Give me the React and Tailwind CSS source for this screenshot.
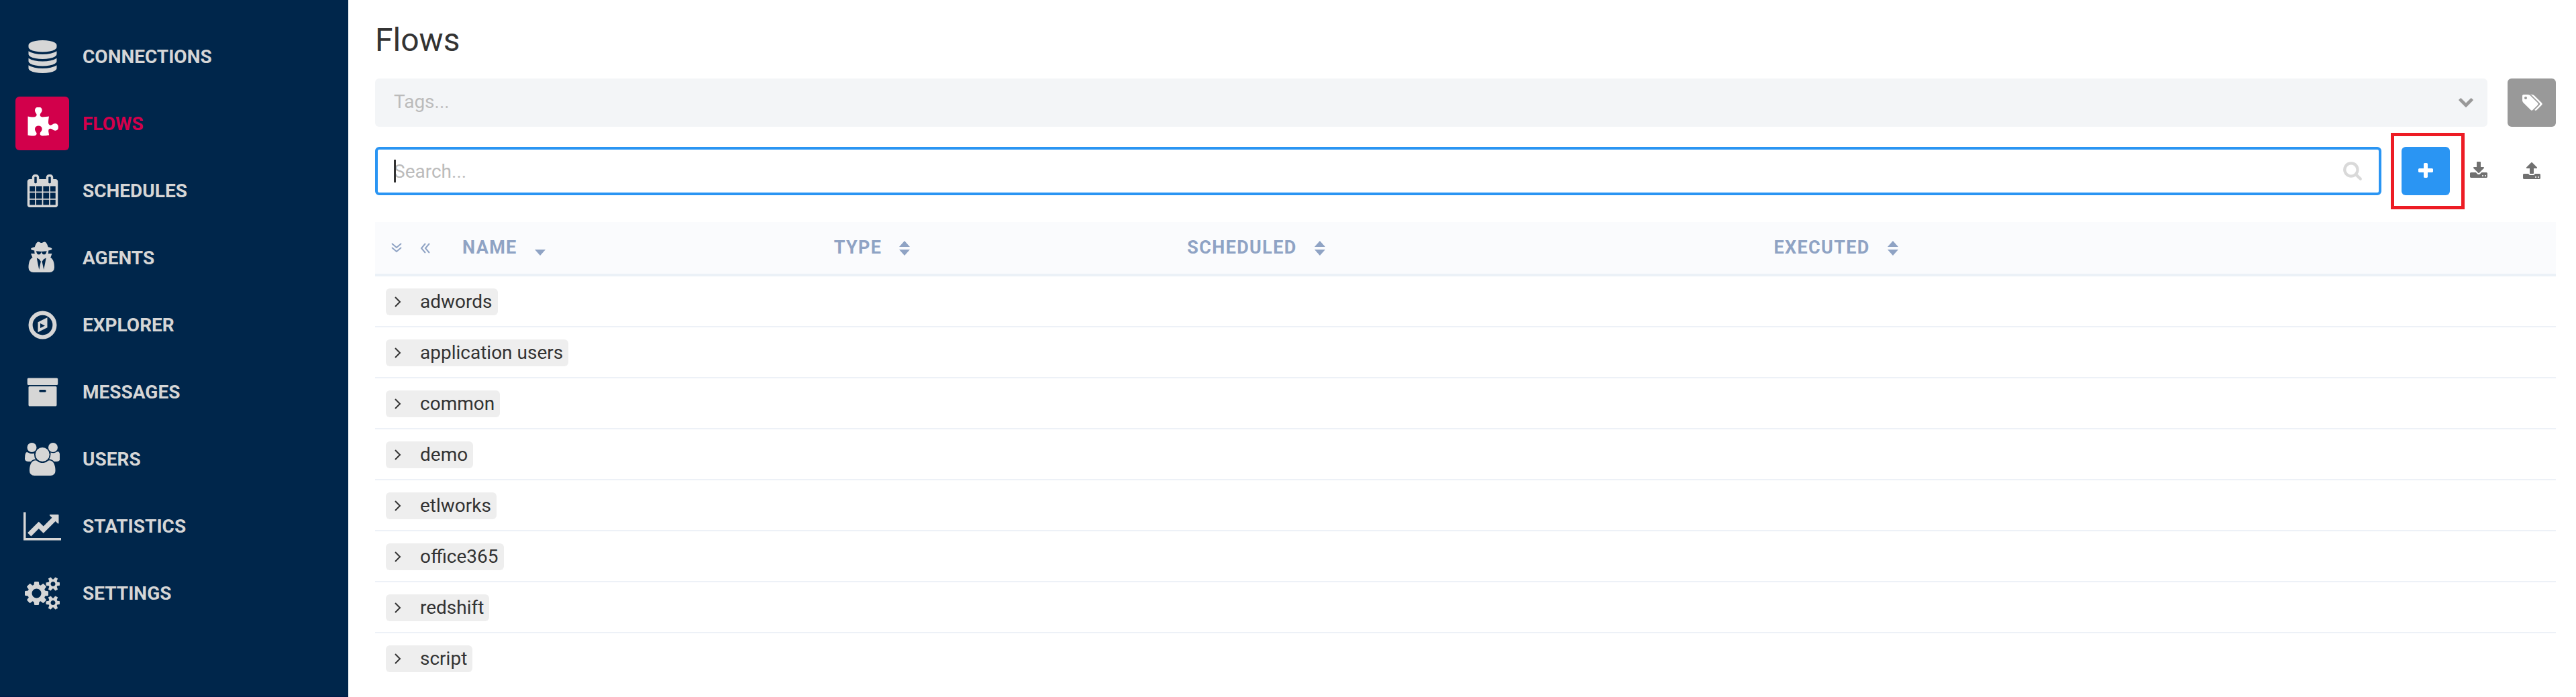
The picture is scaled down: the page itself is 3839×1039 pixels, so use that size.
import React, { useState } from "react";

const icons = {
  database: {
    width: 1792,
    d: "M896 768q237 0 443-43t325-127v170q0 69-103 128t-280 93.5-385 34.5-385-34.5-280-93.5-103-128v-170q119 84 325 127t443 43zm0 768q237 0 443-43t325-127v170q0 69-103 128t-280 93.5-385 34.5-385-34.5-280-93.5-103-128v-170q119 84 325 127t443 43zm0-384q237 0 443-43t325-127v170q0 69-103 128t-280 93.5-385 34.5-385-34.5-280-93.5-103-128v-170q119 84 325 127t443 43zm0-1152q208 0 385 34.5t280 93.5 103 128v128q0 69-103 128t-280 93.5-385 34.5-385-34.5-280-93.5-103-128v-128q0-69 103-128t280-93.5 385-34.5z",
  },
  puzzle: {
    width: 1792,
    d: "M1755 1083q0 81-44.5 135t-123.5 54q-41 0-77.5-17.5t-59-38-56.5-38-71-17.5q-110 0-110 124 0 39 16 115t15 115v5q-22 0-33 1-34 3-97.5 11.5t-115.5 13.5-98 5q-61 0-103-26.5t-42-83.5q0-37 17.5-71t38-56.5 38-59 17.5-77.5q0-79-54-123.5t-135-44.5q-84 0-143 45.5t-59 127.5q0 43 15 83t33.5 64.5 33.5 53 15 50.5q0 45-46 89-37 35-117 35-95 0-245-24-9-2-27.5-4t-27.5-4l-13-2q-1 0-3-1-2 0-2-1v-1024q2 1 17.5 3.5t34 5 21.5 3.5q150 24 245 24 80 0 117-35 46-44 46-89 0-22-15-50.5t-33.5-53-33.5-64.5-15-83q0-82 59-127.5t144-45.5q80 0 134 44.5t54 123.5q0 41-17.5 77.5t-38 59-38 56.5-17.5 71q0 57 42 83.5t103 26.5q64 0 180-15t163-17v2q-1 2-3.5 17.5t-5 34-3.5 21.5q-24 150-24 245 0 80 35 117 44 46 89 46 22 0 50.5-15t53-33.5 64.5-33.5 83-15q82 0 127.5 59t45.5 143z",
  },
  calendar: {
    width: 1792,
    d: "M192 1664h288v-288h-288v288zm352 0h320v-288h-320v288zm-352-352h288v-320h-288v320zm352 0h320v-320h-320v320zm-352-384h288v-288h-288v288zm736 736h320v-288h-320v288zm-384-736h320v-288h-320v288zm768 736h288v-288h-288v288zm-384-352h320v-320h-320v320zm-352-864v-288q0-13-9.5-22.5t-22.5-9.5h-64q-13 0-22.5 9.5t-9.5 22.5v288q0 13 9.5 22.5t22.5 9.5h64q13 0 22.5-9.5t9.5-22.5zm736 864h288v-320h-288v320zm-384-384h320v-288h-320v288zm384 0h288v-288h-288v288zm32-480v-288q0-13-9.5-22.5t-22.5-9.5h-64q-13 0-22.5 9.5t-9.5 22.5v288q0 13 9.5 22.5t22.5 9.5h64q13 0 22.5-9.5t9.5-22.5zm384-64v1280q0 52-38 90t-90 38h-1408q-52 0-90-38t-38-90v-1280q0-52 38-90t90-38h128v-96q0-66 47-113t113-47h64q66 0 113 47t47 113v96h384v-96q0-66 47-113t113-47h64q66 0 113 47t47 113v96h128q52 0 90 38t38 90z",
  },
  agent: {
    width: 1792,
    d: "M704 1536l96-448-96-128-128-64zm256 0l128-640-128 64-96 128zm160-996q-2-4-4-6-10-8-96-8-70 0-167 19-7 2-21 2t-21-2q-97-19-167-19-86 0-96 8-2 2-4 6 2 18 4 27 2 3 7.5 6.5t7.5 10.5q2 4 7.5 20.5t7 20.5 7.5 17 8.5 17 9 14 12 13.5 14 9.5 17.5 8 20.5 4 24.5 2q36 0 59-12.5t32.5-30 14.5-34.5 11.5-29.5 17.5-12.5h12q11 0 17.5 12.5t11.5 29.5 14.5 34.5 32.5 30 59 12.5q13 0 24.5-2t20.5-4 17.5-8 14-9.5 12-13.5 9-14 8.5-17 7.5-17 7-20.5 7.5-20.5q2-7 7.5-10.5t7.5-6.5q2-9 4-27zm416 879q0 121-73 190t-194 69h-874q-121 0-194-69t-73-190q0-61 4.5-118t19-125.5 37.5-123.5 63.5-103.5 93.5-74.5l-90-220h214q-22-64-22-128 0-12 2-32-194-40-194-96 0-57 210-99 17-62 51.5-134t70.5-114q32-37 76-37 30 0 84 31t84 31 84-31 84-31q44 0 76 37 36 42 70.5 114t51.5 134q210 42 210 99 0 56-194 96 7 81-20 160h214l-82 225q63 33 107.5 96.5t65.5 143.5 29 151.5 8 148.5z",
  },
  compass: {
    width: 1792,
    d: "M768 1063l256-128-256-128zM1152 489v542l-512 256v-542zM896 352a544 544 0 1 0 0 1088a544 544 0 1 0 0-1088zM896 128a768 768 0 1 1 0 1536a768 768 0 1 1 0-1536z",
  },
  archive: {
    width: 1792,
    d: "M1088 832q0-26-19-45t-45-19h-256q-26 0-45 19t-19 45 19 45 45 19h256q26 0 45-19t19-45zm576-192v960q0 26-19 45t-45 19h-1408q-26 0-45-19t-19-45v-960q0-26 19-45t45-19h1408q26 0 45 19t19 45zm64-448v256q0 26-19 45t-45 19h-1536q-26 0-45-19t-19-45v-256q0-26 19-45t45-19h1536q26 0 45 19t19 45z",
  },
  users: {
    width: 1920,
    d: "M593 896q-162 5-265 128h-134q-82 0-138-40.5t-56-118.5q0-353 124-353 6 0 43.5 21t97.5 42.5 119 21.5q67 0 133-23-5 37-5 66 0 159 81 296zm1071 637q0 120-73 189.5t-194 69.5h-874q-121 0-194-69.5t-73-189.5q0-53 3.5-103.5t14-109 26.5-108.5 43-97.5 62-81 85.5-53.5 111.5-20q10 0 43 21.5t73 48 107 48 135 21.5 135-21.5 107-48 73-48 43-21.5q61 0 111.5 20t85.5 53.5 62 81 43 97.5 26.5 108.5 14 109 3.5 103.5zm-1024-1277q0 106-75 181t-181 75-181-75-75-181 75-181 181-75 181 75 75 181zm704 384q0 159-112.5 271.5t-271.5 112.5-271.5-112.5-112.5-271.5 112.5-271.5 271.5-112.5 271.5 112.5 112.5 271.5zm576 225q0 78-56 118.5t-138 40.5h-134q-103-123-265-128 81-137 81-296 0-29-5-66 66 23 133 23 59 0 119-21.5t97.5-42.5 43.5-21q124 0 124 353zm-128-609q0 106-75 181t-181 75-181-75-75-181 75-181 181-75 181 75 75 181z",
  },
  chart: {
    width: 2048,
    d: "M2048 1536v128h-2048v-1536h128v1408h1920zm-128-1248v435q0 21-19.5 29.5t-35.5-7.5l-121-121-633 633q-10 10-23 10t-23-10l-233-233-416 416-192-192 585-585q10-10 23-10t23 10l233 233 464-464-121-121q-16-16-7.5-35.5t29.5-19.5h435q14 0 23 9t9 23z",
  },
  cogs: {
    width: 1920,
    d: "M896 896q0-106-75-181t-181-75-181 75-75 181 75 181 181 75 181-75 75-181zm768 512q0-52-38-90t-90-38-90 38-38 90q0 53 37.5 90.5t90.5 37.5 90.5-37.5 37.5-90.5zm0-1024q0-52-38-90t-90-38-90 38-38 90q0 53 37.5 90.5t90.5 37.5 90.5-37.5 37.5-90.5zm-384 421v185q0 10-7 19.5t-16 10.5l-155 24q-11 35-32 76 34 48 90 115 7 11 7 20 0 12-7 19-23 30-82.5 89.5t-78.5 59.5q-11 0-21-7l-115-90q-37 19-77 31-11 108-23 155-7 24-30 24h-186q-11 0-20-7.5t-10-17.5l-23-153q-34-10-75-31l-118 89q-7 7-20 7-11 0-21-8-144-133-144-160 0-9 7-19 10-14 41-53t47-61q-23-44-35-82l-152-24q-10-1-17-9.5t-7-19.5v-185q0-10 7-19.5t16-10.5l155-24q11-35 32-76-34-48-90-115-7-11-7-20 0-12 7-20 22-30 82-89t79-59q11 0 21 7l115 90q34-18 77-32 11-108 23-154 7-24 30-24h186q11 0 20 7.5t10 17.5l23 153q34 10 75 31l118-89q8-7 20-7 11 0 21 8 144 133 144 160 0 8-7 19-12 16-42 54t-45 60q23 48 34 82l152 23q10 2 17 10.5t7 19.5zm640 533v140q0 16-149 31-12 27-30 52 51 113 51 138 0 4-4 7-122 71-124 71-8 0-46-47t-52-68q-20 2-30 2t-30-2q-14 21-52 68t-46 47q-2 0-124-71-4-3-4-7 0-25 51-138-18-25-30-52-149-15-149-31v-140q0-16 149-31 13-29 30-52-51-113-51-138 0-4 4-7 4-2 35-20t59-34 30-16q8 0 46 46.5t52 67.5q20-2 30-2t30 2q51-71 92-112l6-2q4 0 124 70 4 3 4 7 0 25-51 138 17 23 30 52 149 15 149 31zm0-1024v140q0 16-149 31-12 27-30 52 51 113 51 138 0 4-4 7-122 71-124 71-8 0-46-47t-52-68q-20 2-30 2t-30-2q-14 21-52 68t-46 47q-2 0-124-71-4-3-4-7 0-25 51-138-18-25-30-52-149-15-149-31v-140q0-16 149-31 13-29 30-52-51-113-51-138 0-4 4-7 4-2 35-20t59-34 30-16q8 0 46 46.5t52 67.5q20-2 30-2t30 2q51-71 92-112l6-2q4 0 124 70 4 3 4 7 0 25-51 138 17 23 30 52 149 15 149 31z",
  },
  chevronDown: {
    width: 1792,
    d: "M1683 808l-742 741q-19 19-45 19t-45-19l-742-741q-19-19-19-45.5t19-45.5l166-165q19-19 45-19t45 19l531 531 531-531q19-19 45-19t45 19l166 165q19 19 19 45.5t-19 45.5z",
  },
  tags: {
    width: 2048,
    d: "M576 448q0-53-37.5-90.5t-90.5-37.5-90.5 37.5-37.5 90.5 37.5 90.5 90.5 37.5 90.5-37.5 37.5-90.5zm1067 576q0 53-37 90l-491 492q-39 37-91 37-53 0-90-37l-715-716q-38-37-64.5-101t-26.5-117v-416q0-52 38-90t90-38h416q53 0 117 26.5t102 64.5l715 714q37 39 37 91zm384 0q0 53-37 90l-491 492q-39 37-91 37-36 0-59-14t-53-45l470-470q37-37 37-90 0-52-37-91l-715-714q-38-38-102-64.5t-117-26.5h224q53 0 117 26.5t102 64.5l715 714q37 39 37 91z",
  },
  search: {
    width: 1792,
    d: "M1216 832q0-185-131.5-316.5t-316.5-131.5-316.5 131.5-131.5 316.5 131.5 316.5 316.5 131.5 316.5-131.5 131.5-316.5zm512 832q0 52-38 90t-90 38q-54 0-90-38l-343-342q-179 124-399 124-143 0-273.5-55.5t-225-150-150-225-55.5-273.5 55.5-273.5 150-225 225-150 273.5-55.5 273.5 55.5 225 150 150 225 55.5 273.5q0 220-124 399l343 343q37 37 37 90z",
  },
  plus: {
    width: 1792,
    d: "M1600 736v192q0 40-28 68t-68 28h-416v416q0 40-28 68t-68 28h-192q-40 0-68-28t-28-68v-416h-416q-40 0-68-28t-28-68v-192q0-40 28-68t68-28h416v-416q0-40 28-68t68-28h192q40 0 68 28t28 68v416h416q40 0 68 28t28 68z",
  },
  download: {
    width: 1792,
    d: "M1344 1344q0-26-19-45t-45-19-45 19-19 45 19 45 45 19 45-19 19-45zm256 0q0-26-19-45t-45-19-45 19-19 45 19 45 45 19 45-19 19-45zm128-224v320q0 40-28 68t-68 28h-1472q-40 0-68-28t-28-68v-320q0-40 28-68t68-28h465l135 136q58 56 136 56t136-56l136-136h464q40 0 68 28t28 68zm-325-569q17 41-14 70l-448 448q-18 19-45 19t-45-19l-448-448q-31-29-14-70 17-39 59-39h256v-448q0-26 19-45t45-19h256q26 0 45 19t19 45v448h256q42 0 59 39z",
  },
  upload: {
    width: 1792,
    d: "M1344 1472q0-26-19-45t-45-19-45 19-19 45 19 45 45 19 45-19 19-45zm256 0q0-26-19-45t-45-19-45 19-19 45 19 45 45 19 45-19 19-45zm128-224v320q0 40-28 68t-68 28h-1472q-40 0-68-28t-28-68v-320q0-40 28-68t68-28h427q21 56 70.5 92t110.5 36h256q61 0 110.5-36t70.5-92h427q40 0 68 28t28 68zm-325-648q-17 40-59 40h-256v448q0 26-19 45t-45 19h-256q-26 0-45-19t-19-45v-448h-256q-42 0-59-40-17-39 14-69l448-448q18-19 45-19t45 19l448 448q31 30 14 69z",
  },
};

const Icon = ({ name, className }) => (
  <svg
    viewBox={`0 0 ${icons[name].width} 1792`}
    fill="currentColor"
    fillRule={name === "compass" ? "evenodd" : "nonzero"}
    className={className}
    aria-hidden="true"
  >
    <path d={icons[name].d} />
  </svg>
);

const menu = [
  { label: "CONNECTIONS", icon: "database" },
  { label: "FLOWS", icon: "puzzle" },
  { label: "SCHEDULES", icon: "calendar" },
  { label: "AGENTS", icon: "agent" },
  { label: "EXPLORER", icon: "compass" },
  { label: "MESSAGES", icon: "archive" },
  { label: "USERS", icon: "users" },
  { label: "STATISTICS", icon: "chart" },
  { label: "SETTINGS", icon: "cogs" },
];

const folders = [
  "adwords",
  "application users",
  "common",
  "demo",
  "etlworks",
  "office365",
  "redshift",
  "script",
];

const Sidebar = ({ active }) => (
  <nav className="w-[519px] shrink-0 border-b-2 border-[#001d4a] bg-[#00264b] pt-[34px]">
    <ul>
      {menu.map((item) => (
        <li key={item.label}>
          <a
            href="#"
            className={`flex h-[100px] items-center gap-5 pl-[23px] text-[28px] font-bold ${
              item.label === active ? "text-[#d2004b]" : "text-[#d6d6d6]"
            }`}
          >
            <span
              className={`flex size-20 items-center justify-center rounded-md ${
                item.label === active ? "bg-[#d2004b] text-white" : ""
              }`}
            >
              <Icon name={item.icon} className="h-[49px]" />
            </span>
            <span className="pt-px">{item.label}</span>
          </a>
        </li>
      ))}
    </ul>
  </nav>
);

const SortIcon = () => (
  <svg viewBox="0 0 16 22" fill="currentColor" className="h-[22px] w-4" aria-hidden="true">
    <path d="M8 0L16 9H0zM0 13h16L8 22z" />
  </svg>
);

const SortedIcon = () => (
  <svg viewBox="0 0 16 22" fill="currentColor" className="h-[22px] w-4" aria-hidden="true">
    <path d="M0 13h16L8 22z" />
  </svg>
);

const SortButton = ({ label, sorted }) => (
  <button type="button" className="flex items-center gap-[26px] tracking-wider">
    {label}
    {sorted ? <SortedIcon /> : <SortIcon />}
  </button>
);

const FlowsTable = () => (
  <table className="mt-10 w-full table-fixed border-separate border-spacing-0 text-left">
    <thead className="bg-[#fafbfd] text-[27px] text-[#8fa3c4]">
      <tr>
        <th className="h-[81px] w-[20.3%] border-b-4 border-[#ebf1f7] pl-6">
          <div className="flex items-center">
            <button type="button" aria-label="Expand all">
              <svg viewBox="0 0 16 16" fill="none" stroke="currentColor" strokeWidth="2" className="size-4">
                <path d="M1 1l7 6 7-6M1 7l7 6 7-6" />
              </svg>
            </button>
            <button type="button" aria-label="Collapse all" className="mx-[27px]">
              <svg viewBox="0 0 16 16" fill="none" stroke="currentColor" strokeWidth="2" className="size-4">
                <path d="M8 1L2 8l6 7M14 1L8 8l6 7" />
              </svg>
            </button>
            <div className="pl-5">
              <SortButton label="NAME" sorted />
            </div>
          </div>
        </th>
        <th className="w-[16.2%] border-b-4 border-[#ebf1f7] pl-6">
          <SortButton label="TYPE" />
        </th>
        <th className="w-[26.9%] border-b-4 border-[#ebf1f7] pl-6">
          <SortButton label="SCHEDULED" />
        </th>
        <th className="border-b-4 border-[#ebf1f7] pl-6">
          <SortButton label="EXECUTED" />
        </th>
      </tr>
    </thead>
    <tbody>
      {folders.map((folder) => (
        <tr key={folder} className="group h-[76px]">
          <td colSpan="4" className="border-b-2 border-[#edf1f7] px-4 pt-0.5 group-last:border-transparent">
            <button
              type="button"
              className="flex h-10 items-center rounded-md bg-[#eee] pr-2 pl-[13px] text-[28px]"
            >
              <svg viewBox="0 0 10 16" fill="none" stroke="currentColor" strokeWidth="2" className="mr-7 h-4 w-[10px]">
                <path d="M1 1l7 7-7 7" />
              </svg>
              {folder}
            </button>
          </td>
        </tr>
      ))}
    </tbody>
  </table>
);

export default function App() {
  const [search, setSearch] = useState("");

  return (
    <div className="flex min-h-screen bg-white font-[Roboto,sans-serif] text-[#333]">
      <Sidebar active="FLOWS" />

      <main className="min-w-0 flex-1 pt-8 pr-[30px] pl-10">
        <h1 className="text-[48px] leading-[56px]">Flows</h1>

        <div className="mt-[29px] flex gap-[30px]">
          <div className="relative flex-1">
            <select
              aria-label="Tags"
              className="h-[72px] w-full appearance-none rounded-md bg-[#f3f5f7] px-7 pb-0.5 text-[28px] text-[#bbb]"
            >
              <option>Tags...</option>
            </select>
            <Icon name="chevronDown" className="pointer-events-none absolute top-[22px] right-5 size-6 text-[#999]" />
          </div>
          <button
            type="button"
            aria-label="Manage tags"
            className="flex size-[72px] items-center justify-center rounded-md bg-[#999] text-white"
          >
            <Icon name="tags" className="h-7" />
          </button>
        </div>

        <div className="mt-[30px] flex gap-[7px]">
          <div className="relative mr-[23px] flex-1">
            <input
              type="text"
              aria-label="Search"
              placeholder="Search..."
              value={search}
              onChange={(e) => setSearch(e.target.value)}
              className="h-[72px] w-full rounded-md border-4 border-[#2a95f3] px-6 text-[28px] caret-transparent outline-none placeholder:text-[#bbb]"
            />
            {/* text cursor */}
            <span className="absolute top-[19px] left-7 h-[34px] w-[3px] bg-[#333]" />
            <Icon name="search" className="absolute top-5 right-7 size-[30px] text-[#d9d9d9]" />
          </div>
          <div className="relative">
            <button
              type="button"
              aria-label="Add flow"
              className="flex size-[72px] items-center justify-center rounded-md bg-[#2a95f3] text-white"
            >
              <Icon name="plus" className="size-7" />
            </button>
            <span className="pointer-events-none absolute -inset-y-[21px] -right-[22px] -left-4 border-5 border-[#ed1c24]" />
          </div>
          <button type="button" aria-label="Import" className="flex size-[72px] items-center justify-center text-[#707070]">
            <Icon name="download" className="size-7" />
          </button>
          <button type="button" aria-label="Export" className="flex size-[72px] items-center justify-center text-[#707070]">
            <Icon name="upload" className="size-7" />
          </button>
        </div>

        <FlowsTable />
      </main>
    </div>
  );
}
